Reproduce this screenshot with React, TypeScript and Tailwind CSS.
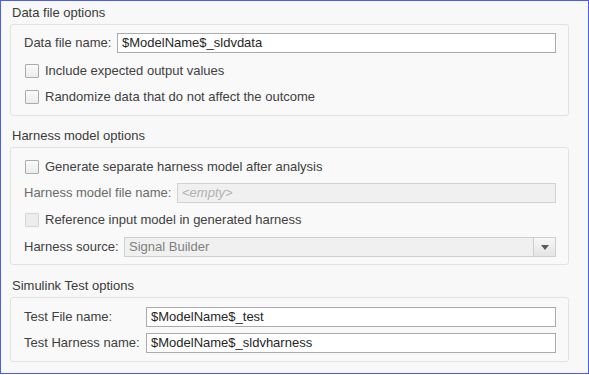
import React from "react";

const font = "font-['Liberation_Sans',Arial,sans-serif]";

function Checkbox({ label, disabled }: { label: string; disabled?: boolean }) {
  return (
    <div className="flex h-5 items-center">
      <span
        className={
          "ml-[1px] h-[14px] w-[14px] rounded-[1px] border " +
          (disabled
            ? "border-[#d4d4d4] bg-[#ededed]"
            : "border-[#ababab] bg-gradient-to-b from-[#fafafa] to-[#ececec]")
        }
      />
      <span className="ml-[6px] text-[13px] text-[#404040]">{label}</span>
    </div>
  );
}

function Field({
  label,
  value,
  inputLeft,
  disabled,
  placeholder,
}: {
  label: string;
  value?: string;
  inputLeft: string;
  disabled?: boolean;
  placeholder?: string;
}) {
  return (
    <div className="flex h-5 items-center">
      <span className={"shrink-0 text-[13px] " + inputLeft + (disabled ? " text-[#6a6a6a]" : " text-[#404040]")}>
        {label}
      </span>
      <div
        className={
          "flex h-5 flex-1 items-center border px-[4px] text-[13px] " +
          (disabled ? "border-[#d2d2d2] bg-[#f0f0f0]" : "border-[#ababab] bg-white text-[#262626]")
        }
      >
        {placeholder ? <span className="italic text-[#b0b0b0]">{placeholder}</span> : value}
      </div>
    </div>
  );
}

function Panel({ title, className, children }: { title: string; className: string; children: React.ReactNode }) {
  return (
    <section className={className}>
      <h2 className="h-4 pl-[2px] text-[13px] leading-4 text-[#3a3a3a]">{title}</h2>
      <div className="mt-[3px] rounded-[3px] border border-[#e2e2e2] bg-[#f9f9f9] pl-[13px] pr-[12px]">
        {children}
      </div>
    </section>
  );
}

export default function App() {
  return (
    <div className={"h-[374px] w-[589px] bg-white " + font}>
      <div className="h-[374px] w-[589px] border border-[#4a5cf2] bg-[#f8f8f8] pl-[9px] pr-[19px] pt-[4px]">
        <Panel title="Data file options" className="">
          <div className="flex flex-col pb-[8px] pt-[8px]">
            <Field label="Data file name:" value="$ModelName$_sldvdata" inputLeft="w-[93px]" />
            <div className="mt-[8px]">
              <Checkbox label="Include expected output values" />
            </div>
            <div className="mt-[6px]">
              <Checkbox label="Randomize data that do not affect the outcome" />
            </div>
          </div>
        </Panel>

        <Panel title="Harness model options" className="mt-[12px]">
          <div className="flex flex-col pb-[7px] pt-[9px]">
            <Checkbox label="Generate separate harness model after analysis" />
            <div className="mt-[6px]">
              <Field label="Harness model file name:" inputLeft="w-[153px]" disabled placeholder="<empty>" />
            </div>
            <div className="mt-[7px]">
              <Checkbox label="Reference input model in generated harness" disabled />
            </div>
            <div className="mt-[7px] flex h-5 items-center">
              <span className="w-[100px] shrink-0 text-[13px] text-[#404040]">Harness source:</span>
              <div className="flex h-5 flex-1 border border-[#cfcfcf] bg-[#f0f0f0]">
                <span className="flex flex-1 items-center px-[4px] text-[13px] text-[#808080]">Signal Builder</span>
                <span className="flex w-[22px] items-center justify-center border-l border-[#cfcfcf] bg-gradient-to-b from-[#f7f7f7] to-[#e4e4e4]">
                  <svg width="8" height="5" viewBox="0 0 8 5">
                    <path d="M0 0h8L4 5z" fill="#5a5a5a" />
                  </svg>
                </span>
              </div>
            </div>
          </div>
        </Panel>

        <Panel title="Simulink Test options" className="mt-[13px]">
          <div className="flex flex-col pb-[8px] pt-[9px]">
            <Field label="Test File name:" value="$ModelName$_test" inputLeft="w-[122px]" />
            <div className="mt-[6px]">
              <Field label="Test Harness name:" value="$ModelName$_sldvharness" inputLeft="w-[122px]" />
            </div>
          </div>
        </Panel>
      </div>
    </div>
  );
}
